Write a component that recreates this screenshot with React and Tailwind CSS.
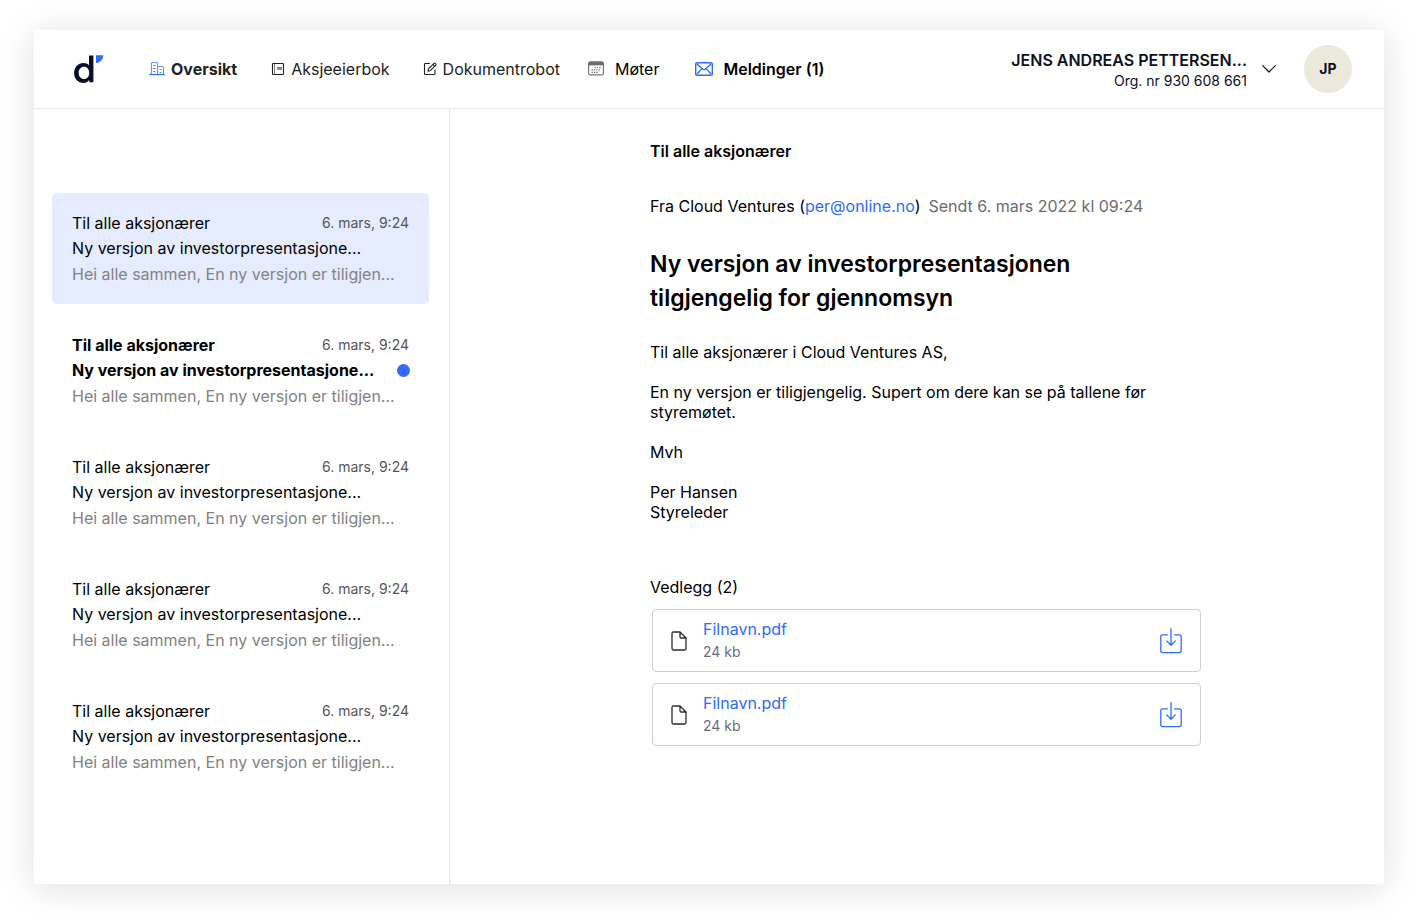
const MESSAGES = [
  { id: 1, selected: true },
  { id: 2, unread: true },
  { id: 3 },
  { id: 4 },
  { id: 5 },
];

const FILES = [
  { id: 1, name: "Filnavn.pdf", size: "24 kb" },
  { id: 2, name: "Filnavn.pdf", size: "24 kb" },
];

function Logo() {
  return (
    <svg width="30" height="30" viewBox="0 0 30 30" role="img" aria-label="d">
      <path d="M15 1.4H19.4V28.2H15.2V26C13.8 27.9 11.9 28.9 9.5 28.9C4.1 28.9 0.1 24.7 0.1 18.9C0.1 13.1 4.1 8.9 9.5 8.9C11.8 8.9 13.7 9.7 15 11.3ZM10 12.8C6.9 12.8 4.7 15.3 4.7 18.9C4.7 22.5 6.9 24.9 10 24.9C13.1 24.9 15.2 22.5 15.2 18.9C15.2 15.3 13.1 12.8 10 12.8Z" fill="#0c1024" />
      <path d="M22 1.3H29.2C29.2 5.4 26.3 8.6 22 9Z" fill="#2f6bff" />
    </svg>
  );
}

function BuildingIcon() {
  return (
    <svg width="16" height="16" viewBox="0 0 16 16" fill="none" stroke="#2f6bff" aria-hidden="true">
      <path d="M0.3 13.5H15.7" strokeWidth="1.2" />
      <path d="M2.5 13.5V2.5Q2.5 1.5 3.5 1.5H7.5Q8.5 1.5 8.5 2.5V13.5M8.5 5.5H13.5Q14.5 5.5 14.5 6.5V13.5" strokeOpacity="0.7" strokeWidth="1.1" />
      <path d="M4 4.5H6.5M4 7.5H6.5M4 10.5H6.5M10.5 8.5H12.5M10.5 11.5H12.5" strokeOpacity="0.8" />
    </svg>
  );
}

function BookIcon() {
  return (
    <svg width="14" height="14" viewBox="0 0 14 14" fill="none" stroke="#222" aria-hidden="true">
      <rect x="1.5" y="1.5" width="11" height="11" rx="0.8" strokeWidth="1.1" />
      <path d="M3.5 2V12" strokeOpacity="0.6" />
      <rect x="6" y="5" width="5" height="3" fill="#8a8a8a" stroke="none" />
    </svg>
  );
}

function EditIcon() {
  return (
    <svg width="14" height="14" viewBox="0 0 14 14" fill="none" stroke="#222" strokeWidth="1.1" strokeLinejoin="round" aria-hidden="true">
      <path d="M7 1.5H2.3Q1.5 1.5 1.5 2.3V11.7Q1.5 12.5 2.3 12.5H11.2Q12 12.5 12 11.7V7.5" />
      <path d="M5 9.2L5.4 6.9L10.9 1.3Q11.5 0.8 12.1 1.3L12.8 2Q13.3 2.6 12.8 3.2L7.3 8.7ZM9.9 2.4L11.8 4.3" />
    </svg>
  );
}

function CalendarIcon() {
  return (
    <svg width="16" height="16" viewBox="0 0 16 16" fill="none" aria-hidden="true">
      <rect x="0.6" y="0.8" width="14.8" height="13" rx="1.6" stroke="#777" strokeWidth="1.2" />
      <path d="M1 4V2.2Q1 1.2 2 1.2H14Q15 1.2 15 2.2V4Z" fill="#6e6e6e" stroke="#6e6e6e" strokeWidth="0.8" />
      <path d="M6.5 6.5H13M3.5 8.9H13M3.5 11.3H10.5" stroke="#777" strokeWidth="1.2" strokeDasharray="1.4 1" />
    </svg>
  );
}

function MailIcon() {
  return (
    <svg width="18" height="14" viewBox="0 0 18 14" fill="none" stroke="#2f6bff" strokeWidth="1.4" strokeLinejoin="round" aria-hidden="true">
      <rect x="0.7" y="0.7" width="16.6" height="12.6" rx="1.4" />
      <path d="M1.8 2L8 7.2Q9 8 10 7.2L16.2 2M2 12L6.6 6.9M16 12L11.4 6.9" />
    </svg>
  );
}

function FileIcon() {
  return (
    <svg width="16" height="20" viewBox="0 0 16 20" fill="none" stroke="#2b2b2b" strokeWidth="1.3" strokeLinejoin="round" aria-hidden="true">
      <path d="M9 1H2.4Q1 1 1 2.4V17.6Q1 19 2.4 19H13.6Q15 19 15 17.6V7ZM9 1V5.8Q9 7 10.2 7H15" />
    </svg>
  );
}

function DownloadIcon() {
  return (
    <svg width="22" height="26" viewBox="0 0 22 26" fill="none" stroke="#2f6bff" strokeWidth="1.3" strokeLinecap="round" strokeLinejoin="round" aria-hidden="true">
      <path d="M7.4 6.8H2.8Q0.8 6.8 0.8 8.8V22.6Q0.8 24.6 2.8 24.6H19.2Q21.2 24.6 21.2 22.6V8.8Q21.2 6.8 19.2 6.8H14.6" />
      <path d="M11 0.7V17.2M6.6 12.9L11 17.3L15.4 12.9" />
    </svg>
  );
}

function Message({ selected, unread }) {
  const weight = unread ? "font-bold" : "font-normal";
  return (
    <button
      type="button"
      className={`block w-full rounded-[5px] px-5 pt-[18px] pb-[17px] text-left ${selected ? "bg-[#e6ecff]" : "bg-white"}`}
    >
      <span className="flex items-start justify-between leading-[25px]">
        <span className={weight}>Til alle aksjonærer</span>
        <span className="text-sm leading-6 text-[#555]">6. mars, 9:24</span>
      </span>
      <span className="flex items-center justify-between leading-[25px]">
        <span className={weight}>Ny versjon av investorpresentasjone...</span>
        {unread && <span className="-mr-px size-[13px] rounded-full bg-[#2f6bff]" />}
      </span>
      <span className="block leading-[26px] text-[#828282]">Hei alle sammen, En ny versjon er tiligjen...</span>
    </button>
  );
}

export default function App() {
  return (
    <div className="flex min-h-screen bg-white px-[34px] pt-[30px] pb-[38px] font-['Inter',sans-serif] text-base text-black">
      <div className="flex flex-1 flex-col bg-white shadow-[0_4px_34px_rgba(0,0,0,0.13)]">
        <header className="flex h-[79px] items-center justify-between border-b border-[#ebebeb] pr-8 pl-10">
          <div className="flex items-center">
            <a href="#hjem" aria-label="Hjem"><Logo /></a>
            <nav className="ml-[45px] flex items-center leading-5 text-[#222]">
              <a href="#oversikt" className="flex items-center gap-[6px] font-bold"><BuildingIcon />Oversikt</a>
              <a href="#aksjeeierbok" className="ml-[34px] flex items-center gap-[6px]"><BookIcon />Aksjeeierbok</a>
              <a href="#dokumentrobot" className="ml-[33px] flex items-center gap-[6px]"><EditIcon />Dokumentrobot</a>
              <a href="#moter" className="ml-7 flex items-center gap-[11px] text-black"><CalendarIcon />Møter</a>
              <a href="#meldinger" className="ml-9 flex items-center gap-[10px] font-semibold text-black"><MailIcon />Meldinger (1)</a>
            </nav>
          </div>
          <div className="flex items-center gap-7 text-[#0c1024]">
            <button type="button" className="flex items-center gap-[15px] text-right">
              <span className="pt-[3px]">
                <span className="block leading-[21px] font-semibold">JENS ANDREAS PETTERSEN...</span>
                <span className="block text-sm leading-5">Org. nr 930 608 661</span>
              </span>
              <svg width="14" height="8" viewBox="0 0 14 8" fill="none" stroke="#0c1024" strokeWidth="1.2" strokeLinecap="round" strokeLinejoin="round" aria-hidden="true">
                <path d="M0.7 0.7L7 7L13.3 0.7" />
              </svg>
            </button>
            <div className="flex size-12 items-center justify-center rounded-full bg-[#ebe9db] text-sm font-bold">JP</div>
          </div>
        </header>
        <div className="flex flex-1">
          <aside className="flex w-[416px] shrink-0 flex-col gap-[11px] border-r border-[#e2e2e2] pt-[84px] pr-5 pl-[18px]">
            {MESSAGES.map((m) => (
              <Message key={m.id} selected={m.selected} unread={m.unread} />
            ))}
          </aside>
          <main className="flex-1 pt-8 pl-[200px]">
            <div className="max-w-[551px] leading-5">
              <p className="font-semibold">Til alle aksjonærer</p>
              <p className="mt-[35px]">
                Fra Cloud Ventures (<a href="mailto:per@online.no" className="text-[#2f6bff]">per@online.no</a>)
                <span className="ml-2 text-[#6b6b6b]">Sendt 6. mars 2022 kl 09:24</span>
              </p>
              <h1 className="mt-[31px] max-w-[480px] text-[23px] leading-[34px] font-semibold">
                Ny versjon av investorpresentasjonen tilgjengelig for gjennomsyn
              </h1>
              <div className="mt-[27px] flex flex-col gap-5">
                <p>Til alle aksjonærer i Cloud Ventures AS,</p>
                <p>En ny versjon er tiligjengelig. Supert om dere kan se på tallene før styremøtet.</p>
                <p>Mvh</p>
                <p>Per Hansen<br />Styreleder</p>
              </div>
              <h2 className="mt-[55px]">Vedlegg (2)</h2>
              <ul className="mt-3 ml-[2px] flex flex-col gap-[11px]">
                {FILES.map((f) => (
                  <li key={f.id} className="flex h-[63px] items-center rounded-[4px] border border-[#cfcfcf] px-[18px]">
                    <FileIcon />
                    <div className="ml-4 flex-1">
                      <a href="#fil" className="block leading-[22px] text-[#2f6bff]">{f.name}</a>
                      <span className="block text-sm leading-[23px] text-[#6b6b7d]">{f.size}</span>
                    </div>
                    <button type="button" aria-label="Last ned"><DownloadIcon /></button>
                  </li>
                ))}
              </ul>
            </div>
          </main>
        </div>
      </div>
    </div>
  );
}
